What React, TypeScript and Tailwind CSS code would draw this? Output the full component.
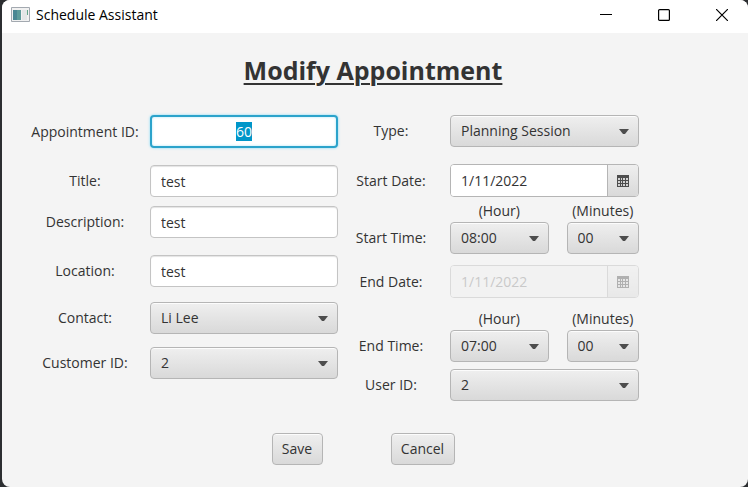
import { useEffect, useRef } from "react";
import type { ReactNode } from "react";

const face =
  "w-full rounded-[4px] border border-[#b5b5b5] bg-linear-to-b from-[#efefef] to-[#d9d9d9] text-[#333333] shadow-[inset_0_1px_0_#fcfcfc]";

function Select({ id, options, label }: { id: string; options: string[]; label?: string }) {
  return (
    <div className="relative w-full">
      <select
        id={id}
        aria-label={label}
        className={`${face} block h-8 appearance-none pl-[10px] pr-7 outline-none`}
      >
        {options.map((o) => (
          <option key={o}>{o}</option>
        ))}
      </select>
      <svg
        className="pointer-events-none absolute right-[10px] top-[14px]"
        width="10"
        height="5"
        viewBox="0 0 10 5"
        aria-hidden="true"
      >
        <path d="M0 0h10L6 5H4z" fill="#4d4d4d" />
      </svg>
    </div>
  );
}

function TextField({ id, value }: { id: string; value: string }) {
  return (
    <input
      id={id}
      defaultValue={value}
      className="h-8 w-full min-w-0 rounded-[4px] border border-[#c4c4c4] bg-white px-[10px] text-[#333333] shadow-[inset_0_1px_1px_#e4e4e4] outline-none"
    />
  );
}

function DateField({ id, value, disabled }: { id: string; value: string; disabled?: boolean }) {
  return (
    <div
      className={`flex h-[33px] w-full min-w-0 overflow-hidden rounded-[4px] border border-[#b5b5b5] bg-white ${disabled ? "opacity-40" : ""}`}
    >
      <input
        id={id}
        defaultValue={value}
        disabled={disabled}
        className={`min-w-0 flex-1 px-[10px] outline-none ${disabled ? "bg-[#f0f0f0] text-[#8a8a8a]" : "bg-white text-[#333333]"}`}
      />
      <button
        type="button"
        disabled={disabled}
        aria-label="Open calendar"
        className="flex w-[31px] shrink-0 items-center justify-center border-l border-[#b5b5b5] bg-linear-to-b from-[#efefef] to-[#d9d9d9]"
      >
        <svg width="12" height="12" viewBox="0 0 12 12" aria-hidden="true">
          <path d="M0 0h12v12H0z" fill="#4d4d4d" />
          <path
            d="M1 3h2v2H1zM4 3h1v2H4zM6 3h2v2H6zM9 3h2v2H9zM1 6h2v2H1zM4 6h1v2H4zM6 6h2v2H6zM9 6h2v2H9zM1 9h2v2H1zM4 9h1v2H4zM6 9h2v2H6zM9 9h2v2H9z"
            fill="#d2d2d2"
          />
        </svg>
      </button>
    </div>
  );
}

function LeftRow({ id, label, children }: { id: string; label: string; children: ReactNode }) {
  return (
    <div className="flex items-center">
      <label htmlFor={id} className="w-[130px] shrink-0 text-center">
        {label}
      </label>
      {children}
    </div>
  );
}

function RightRow({ id, label, children }: { id: string; label: string; children: ReactNode }) {
  return (
    <div className="flex items-center">
      <label htmlFor={id} className="mr-2 w-[102px] shrink-0 text-center">
        {label}
      </label>
      {children}
    </div>
  );
}

function TimeRow({ name, label, hour }: { name: string; label: string; hour: string }) {
  return (
    <div role="group" aria-label={label} className="flex items-end">
      <span className="mr-2 flex h-8 w-[102px] shrink-0 items-center justify-center">{label}</span>
      <div className="grid flex-1 grid-cols-[98fr_72fr] gap-x-[18px] gap-y-px">
        <label htmlFor={`${name}-hour`} className="text-center leading-5">
          (Hour)
        </label>
        <label htmlFor={`${name}-minutes`} className="whitespace-nowrap text-center leading-5">
          (Minutes)
        </label>
        <Select id={`${name}-hour`} options={[hour]} />
        <Select id={`${name}-minutes`} options={["00"]} />
      </div>
    </div>
  );
}

export default function App() {
  const idField = useRef<HTMLInputElement>(null);

  useEffect(() => {
    idField.current?.focus();
    idField.current?.select();
  }, []);

  return (
    <div className="min-h-screen bg-[#2c2e31] pl-[2px] font-['Open_Sans','Noto_Sans',sans-serif] text-[14px] leading-5 text-[#333333]">
      <div className="flex min-h-screen flex-col overflow-hidden rounded-[8px] bg-[#f4f4f4]">
        <header className="flex h-[33px] items-center bg-white pb-1 pl-[9px] pr-5 text-black">
          <svg width="19" height="15" viewBox="0 0 19 15" aria-hidden="true">
            <path d="M.5.5h18v14H.5z" fill="#f1f1f1" stroke="#a3a9b0" />
            <path d="M2 3h8v10H2z" fill="#5d9b9a" />
            <path d="M2 3h4v10H2z" fill="#4a8793" />
            <path d="M11 3h5v10h-5z" fill="#e3e6e6" />
            <path d="M16 3h1v5h-1z" fill="#62a58a" />
          </svg>
          <span className="ml-[6px] flex-1">Schedule Assistant</span>
          <div className="flex gap-[46px]">
            <button type="button" aria-label="Minimize">
              <svg width="12" height="12" viewBox="0 0 12 12" aria-hidden="true">
                <path d="M0 5.5h12" stroke="#000" />
              </svg>
            </button>
            <button type="button" aria-label="Maximize">
              <svg width="12" height="12" viewBox="0 0 12 12" fill="none" aria-hidden="true">
                <rect x=".6" y=".6" width="10.8" height="10.8" rx="1" stroke="#000" strokeWidth="1.2" />
              </svg>
            </button>
            <button type="button" aria-label="Close">
              <svg width="12" height="12" viewBox="0 0 12 12" aria-hidden="true">
                <path d="M0 0l12 12M12 0L0 12" stroke="#000" strokeWidth="1.2" />
              </svg>
            </button>
          </div>
        </header>

        <form onSubmit={(e) => e.preventDefault()} className="pl-[18px] pr-[109px] pt-[19px]">
          <h1 className="ml-[87px] text-center text-[25px] font-bold leading-9 underline decoration-2 underline-offset-[3px]">
            Modify Appointment
          </h1>

          <div className="mt-[27px] grid grid-cols-[minmax(0,318fr)_minmax(0,299fr)] gap-x-[2px]">
            <div>
              <LeftRow id="appointment-id" label="Appointment ID:">
                <input
                  id="appointment-id"
                  ref={idField}
                  defaultValue="60"
                  className="h-[33px] w-full min-w-0 rounded-[4px] border-2 border-[#2ba3cb] bg-white text-center shadow-[0_0_2px_1px_#bde8f6,inset_0_0_2px_1px_#d9f3fb] outline-none selection:bg-[#0096c9] selection:text-white"
                />
              </LeftRow>
              <div className="mt-[17px]">
                <LeftRow id="title" label="Title:">
                  <TextField id="title" value="test" />
                </LeftRow>
              </div>
              <div className="mt-[9px]">
                <LeftRow id="description" label="Description:">
                  <TextField id="description" value="test" />
                </LeftRow>
              </div>
              <div className="mt-[17px]">
                <LeftRow id="location" label="Location:">
                  <TextField id="location" value="test" />
                </LeftRow>
              </div>
              <div className="mt-[15px]">
                <LeftRow id="contact" label="Contact:">
                  <Select id="contact" options={["Li Lee"]} />
                </LeftRow>
              </div>
              <div className="mt-[13px]">
                <LeftRow id="customer" label="Customer ID:">
                  <Select id="customer" options={["2"]} />
                </LeftRow>
              </div>
            </div>

            <div>
              <RightRow id="type" label="Type:">
                <Select id="type" options={["Planning Session"]} />
              </RightRow>
              <div className="mt-[17px]">
                <RightRow id="start-date" label="Start Date:">
                  <DateField id="start-date" value="1/11/2022" />
                </RightRow>
              </div>
              <div className="mt-1">
                <TimeRow name="start" label="Start Time:" hour="08:00" />
              </div>
              <div className="mt-[11px]">
                <RightRow id="end-date" label="End Date:">
                  <DateField id="end-date" value="1/11/2022" disabled />
                </RightRow>
              </div>
              <div className="mt-[11px]">
                <TimeRow name="end" label="End Time:" hour="07:00" />
              </div>
              <div className="mt-[7px]">
                <RightRow id="user" label="User ID:">
                  <Select id="user" options={["2"]} />
                </RightRow>
              </div>
            </div>
          </div>

          <div className="ml-[87px] mt-8 flex justify-center gap-[68px] pr-5">
            <button type="submit" className={`${face} h-8 max-w-[51px]`}>
              Save
            </button>
            <button type="button" className={`${face} h-8 max-w-[64px]`}>
              Cancel
            </button>
          </div>
        </form>
      </div>
    </div>
  );
}
